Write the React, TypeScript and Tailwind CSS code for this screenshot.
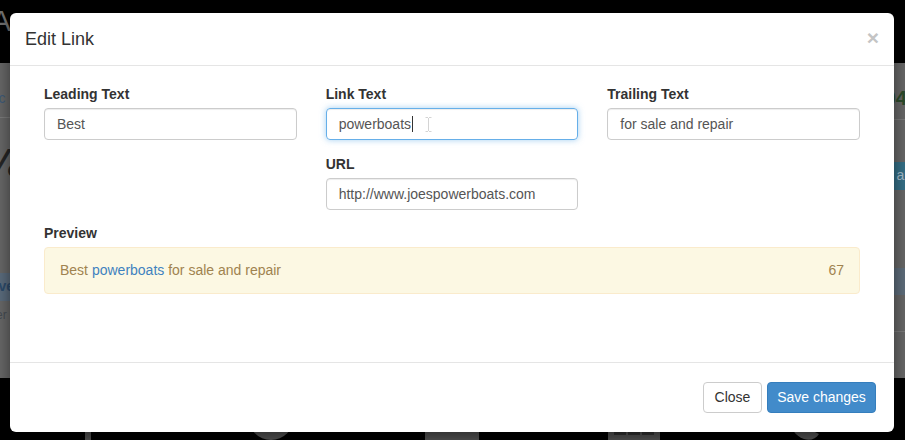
import React from 'react'

function Field({ label, value, focused }: { label: string; value: string; focused?: boolean }) {
  return (
    <div className="flex flex-col">
      <label className="mb-[4px] text-[14px] font-bold leading-5 text-[#333]">{label}</label>
      <div
        className={`relative flex h-[32px] items-center rounded-[4px] border px-[12px] text-[14px] text-[#555] ${
          focused
            ? 'border-[#66afe9] shadow-[inset_0_1px_1px_rgba(0,0,0,0.075),0_0_6px_rgba(102,175,233,0.6)]'
            : 'border-[#ccc] shadow-[inset_0_1px_1px_rgba(0,0,0,0.075)]'
        }`}
      >
        <span>{value}</span>
        {focused && (
          <>
            <span className="ml-[1px] h-[16px] w-px bg-[#333]" />
            <svg className="ml-[12px]" width="7" height="15" viewBox="0 0 7 15" fill="none" stroke="#d4d4d4" strokeWidth="1">
              <path d="M0.5 0.5h2.5M4 0.5h2.5M3.5 1v13M0.5 14.5h2.5M4 14.5h2.5" />
            </svg>
          </>
        )}
      </div>
    </div>
  )
}

function Backdrop() {
  return (
    <div className="flex h-full flex-col">
      {/* navbar */}
      <div className="h-[63px] overflow-hidden bg-black">
        <span className="-ml-[9px] mt-[6px] block text-[30px] leading-none text-[#6e6e6e]">A</span>
      </div>
      {/* page content, dimmed */}
      <div className="flex h-[316px] justify-between bg-[#676767]">
        <div className="flex w-[40px] flex-col overflow-hidden">
          <div className="flex h-[55px] items-center border-b border-[#7a7a7a] pt-[18px]">
            <span className="-ml-[14px] text-[14px] text-[#3e5a78]">arc</span>
          </div>
          <div className="mt-[25px] h-[50px] -ml-[18px] text-[40px] italic leading-none text-[#252525]">Va</div>
          <div className="mt-[80px] flex h-[28px] items-center bg-[#5a6b7c]">
            <span className="-ml-[10px] text-[14px] font-bold text-[#2c4a6a]">ove</span>
          </div>
          <div className="mt-[5px] -ml-[10px] text-[12px] text-[#454b52]">ser</div>
        </div>
        <div className="flex w-[40px] flex-col items-end overflow-hidden">
          <div className="flex h-[57px] w-full items-center justify-end border-b border-[#7a7a7a] pt-[14px]">
            <span className="-mr-[2px] text-[20px] font-bold text-[#2b4b2b]">04</span>
          </div>
          <div className="mt-[42px] flex h-[28px] w-full items-center justify-end bg-[#356f86]">
            <span className="-mr-[4px] text-[14px] text-[#a5bccb]">ar</span>
          </div>
          <div className="mt-[78px] h-[27px] w-full bg-[#5d6c7a]" />
          <div className="mt-[36px] h-px w-full bg-[#7a7a7a]" />
        </div>
      </div>
      {/* footer icons */}
      <div className="flex flex-1 items-start bg-black pt-[22px]">
        <svg className="ml-[81px]" width="14" height="40" viewBox="0 0 14 40" fill="#555">
          <rect x="4" y="0" width="6" height="40" />
          <rect x="0" y="8" width="14" height="6" />
        </svg>
        <svg className="ml-[153px]" width="46" height="40" viewBox="0 0 46 40" fill="#555">
          <path d="M0 0h46v17a23 23 0 0 1-46 0z" />
        </svg>
        <svg className="ml-[131px]" width="54" height="40" viewBox="0 0 54 40">
          <rect width="54" height="40" fill="#555" />
          <path d="M2 2l25 22 25-22" stroke="#333" strokeWidth="3" fill="none" />
        </svg>
        <svg className="ml-[129px]" width="52" height="40" viewBox="0 0 52 40">
          <rect width="52" height="40" fill="#555" />
          <rect x="6" y="32" width="12" height="3" fill="#333" />
          <rect x="20" y="32" width="12" height="3" fill="#333" />
          <rect x="34" y="32" width="12" height="3" fill="#333" />
        </svg>
        <svg className="ml-[130px]" width="29" height="40" viewBox="0 0 29 40" fill="#555">
          <path d="M0 0h10v22c0 6 5 10 11 8l8 4c-3 5-9 7-15 5C5 36 0 28 0 18z" />
        </svg>
      </div>
    </div>
  )
}

export default function App() {
  return (
    <div className="relative h-[440px] w-[905px] overflow-hidden bg-black font-['Liberation_Sans',Arial,sans-serif]">
      <Backdrop />

      {/* modal */}
      <div className="absolute left-[10px] top-[13px] flex h-[419px] w-[884px] flex-col rounded-[6px] bg-white shadow-[0_5px_15px_rgba(0,0,0,0.5)]">
        <div className="flex h-[53px] shrink-0 items-center justify-between border-b border-[#e5e5e5] pl-[15px] pr-[15px]">
          <h4 className="text-[18px] leading-none text-[#333]">Edit Link</h4>
          <span className="-mt-[4px] text-[21px] font-bold leading-none text-[#c4c4c4]">×</span>
        </div>

        <div className="flex-1 px-[34px] pt-[18px]">
          <div className="grid grid-cols-3 gap-x-[29px] gap-y-[14px]">
            <Field label="Leading Text" value="Best" />
            <Field label="Link Text" value="powerboats" focused />
            <Field label="Trailing Text" value="for sale and repair" />
            <div className="col-start-2">
              <Field label="URL" value="http://www.joespowerboats.com" />
            </div>
          </div>

          <div className="mt-[13px]">
            <div className="mb-[4px] text-[14px] font-bold leading-5 text-[#333]">Preview</div>
            <div className="flex h-[47px] items-center justify-between rounded-[4px] border border-[#faebcc] bg-[#fcf8e3] px-[15px] text-[14px] text-[#a0834f]">
              <span>
                Best <a className="text-[#3f82bf]">powerboats</a> for sale and repair
              </span>
              <span>67</span>
            </div>
          </div>
        </div>

        <div className="flex h-[70px] shrink-0 items-center justify-end gap-[5px] border-t border-[#e5e5e5] pr-[18px]">
          <button className="h-[31px] w-[59px] rounded-[4px] border border-[#ccc] bg-white text-[14px] text-[#333]">
            Close
          </button>
          <button className="h-[31px] w-[109px] rounded-[4px] border border-[#357ebd] bg-[#428bca] text-[14px] text-white">
            Save changes
          </button>
        </div>
      </div>
    </div>
  )
}
